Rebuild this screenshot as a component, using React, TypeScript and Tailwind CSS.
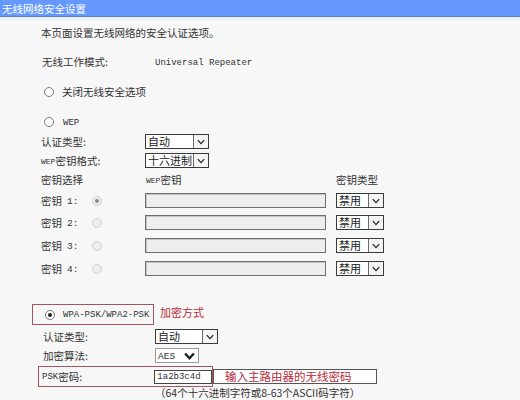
import type { ReactNode } from 'react';

const cjk = { fontFamily: '"Noto Sans CJK SC", "Noto Sans", sans-serif' };
const mono = { fontFamily: '"Liberation Mono", "DejaVu Sans Mono", monospace' };

const Chevron = ({ bold = false }: { bold?: boolean }) => (
  <svg width={bold ? 11 : 8} height={bold ? 8 : 6} viewBox="0 0 10 7" fill="none">
    <path d="M1 1.2 L5 5.5 L9 1.2" stroke="#222" strokeWidth={bold ? 2.2 : 1.6} />
  </svg>
);

// small latin bits (WEP, PSK, 1:) set in mono next to CJK text
const Mono = ({ children, size = 'text-[9px]' }: { children: ReactNode; size?: string }) => (
  <span className={`${size} leading-none translate-y-[1px]`} style={mono}>
    {children}
  </span>
);

const Select = ({ value, width }: { value: string; width: string }) => (
  <div className={`${width} h-[15px] flex items-stretch border border-[#3a3a3a] bg-white`}>
    <span className="flex-1 flex items-center pl-[2px] text-[11px] leading-none text-[#222] whitespace-nowrap">
      {value}
    </span>
    <span className="w-[15px] shrink-0 flex items-center justify-center border-l border-[#6a6a6a] bg-[#f4f4f4]">
      <Chevron />
    </span>
  </div>
);

const Radio = ({ checked = false, muted = false }: { checked?: boolean; muted?: boolean }) => (
  <span
    className={`w-[10px] h-[10px] rounded-full border flex items-center justify-center ${
      muted ? 'border-[#cfcfcf] bg-[#eeeeee]' : 'border-[#7a7a7a] bg-white'
    }`}
  >
    {checked && <span className={`w-[4px] h-[4px] rounded-full ${muted ? 'bg-[#8a8a8a]' : 'bg-[#222]'}`} />}
  </span>
);

const Row = ({ className, children }: { className: string; children: ReactNode }) => (
  <div className={`flex items-center ${className}`}>{children}</div>
);

const keys = ['1', '2', '3', '4'];
const keyGaps = ['mt-[6px]', 'mt-[7px]', 'mt-[8px]', 'mt-[8px]'];

export default function App() {
  return (
    <div className="w-[520px] h-[400px] overflow-hidden bg-[#f7f7f7] text-[#333] text-[10.5px]" style={cjk}>
      <div className="h-[17px] bg-[#6699ff] border-b border-[#6b7fa8] pl-[2px] text-white text-[10.5px] leading-[17px]">
        无线网络安全设置
      </div>
      <div className="h-[3px] bg-[#e4f0fb]" />

      <div className="pl-[41px] flex flex-col">
        <Row className="mt-[6px] h-[14px]">本页面设置无线网络的安全认证选项。</Row>

        <Row className="mt-[15px] h-[14px]">
          <span className="w-[114px] pl-[1px]">无线工作模式:</span>
          <Mono>Universal Repeater</Mono>
        </Row>

        <Row className="mt-[16px] h-[14px] pl-[3px] gap-[8px]">
          <Radio />
          <span>关闭无线安全选项</span>
        </Row>

        <Row className="mt-[16px] h-[14px] pl-[3px] gap-[9px]">
          <Radio />
          <Mono>WEP</Mono>
        </Row>

        <Row className="mt-[5px] h-[15px]">
          <span className="w-[104px]">认证类型:</span>
          <Select value="自动" width="w-[64px]" />
        </Row>

        <Row className="mt-[4px] h-[15px]">
          <span className="w-[104px] flex items-center">
            <Mono size="text-[8px]">WEP</Mono>
            <span>密钥格式:</span>
          </span>
          <Select value="十六进制" width="w-[64px]" />
        </Row>

        <Row className="mt-[5px] h-[14px]">
          <span className="w-[105px]">密钥选择</span>
          <span className="w-[190px] flex items-center">
            <Mono size="text-[8px]">WEP</Mono>
            <span>密钥</span>
          </span>
          <span>密钥类型</span>
        </Row>

        {keys.map((k, i) => (
          <Row key={k} className={`${keyGaps[i]} h-[15px]`}>
            <span className="w-[51px] flex items-center gap-[5px]">
              <span>密钥</span>
              <Mono size="text-[9.5px]">{k}:</Mono>
            </span>
            <span className="w-[53px]">
              <Radio checked={i === 0} muted />
            </span>
            <span className="w-[181px] h-[15px] border border-[#6e6e6e] bg-[#eeeeee] shadow-[inset_1px_1px_0_#c4c4c4]" />
            <span className="w-[10px]" />
            <Select value="禁用" width="w-[48px]" />
          </Row>
        ))}
      </div>

      <div className="flex flex-col pl-[32px]">
        <Row className="mt-[28px] h-[21px]">
          <div className="w-[122px] h-[21px] border border-[#a2555f] flex items-center pl-[12px] gap-[8px]">
            <Radio checked />
            <Mono>WPA-PSK/WPA2-PSK</Mono>
          </div>
          <span className="ml-[6px] -mt-[5px] text-[11px] text-[#b8283a]">加密方式</span>
        </Row>

        <Row className="mt-[4px] h-[15px] pl-[11px]">
          <span className="w-[112px]">认证类型:</span>
          <Select value="自动" width="w-[63px]" />
        </Row>

        <Row className="mt-[4px] h-[15px] pl-[11px]">
          <span className="w-[112px]">加密算法:</span>
          <div className="w-[44px] h-[15px] flex items-center border border-[#9a9a9a] bg-white pl-[2px] pr-[3px]">
            <span className="flex-1 flex items-center">
              <Mono size="text-[9.5px]">AES</Mono>
            </span>
            <Chevron bold />
          </div>
        </Row>

        <Row className="mt-[3px] h-[21px] pl-[6px]">
          <div className="w-[175px] h-[21px] border border-[#a2555f] flex items-center pl-[3px]">
            <span className="w-[113px] flex items-center">
              <Mono>PSK</Mono>
              <span>密码:</span>
            </span>
            <span className="w-[58px] h-[14px] border border-[#444] bg-white pl-[2px] flex items-center">
              <Mono>1a2b3c4d</Mono>
            </span>
          </div>
          <div className="w-[164px] h-[15px] border border-[#555] bg-white flex items-center pl-[11px] text-[11.5px] text-[#b8283a]">
            输入主路由器的无线密码
          </div>
        </Row>

        <Row className="h-[11px] pl-[123px] text-[10.5px] leading-[11px]">（64个十六进制字符或8-63个ASCII码字符）</Row>
      </div>
    </div>
  );
}
